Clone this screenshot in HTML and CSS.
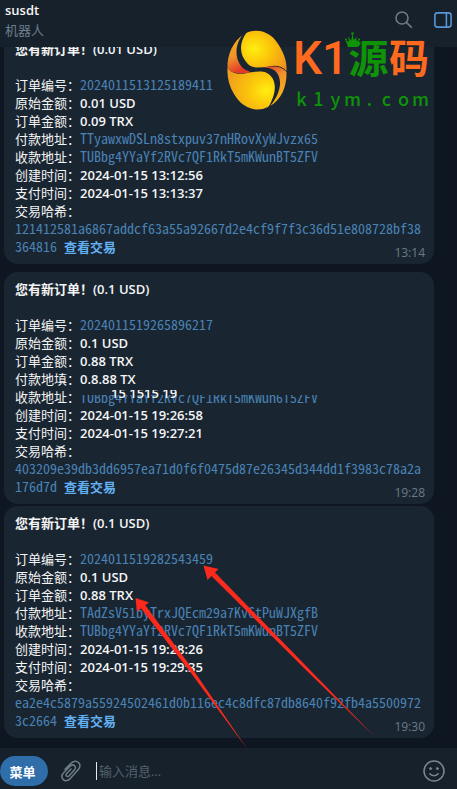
FILE: index.html
```
<!DOCTYPE html>
<html lang="zh-CN">

<head>
    <meta charset="UTF-8">
    <meta name="viewport" content="width=device-width, initial-scale=1">
    <title>susdt</title>
    <link rel="stylesheet" href="styles.css">
</head>

<body>
    <div class="app">
        <header class="chat-header">
            <div class="chat-info">
                <h1 class="chat-name">susdt</h1>
                <div class="chat-status">机器人</div>
            </div>
            <div class="header-actions">
                <button class="icon-button search-button" aria-label="搜索">
                    <svg width="18" height="18" viewBox="0 0 18 18" fill="none" stroke="#6f7b85" stroke-width="1.6">
                        <circle cx="7" cy="7" r="6" />
                        <path d="M11.3 11.3L16.8 16.6" />
                    </svg>
                </button>
                <button class="icon-button" aria-label="侧栏">
                    <svg width="18" height="16" viewBox="0 0 18 16" fill="none" stroke="#5795d4" stroke-width="1.6">
                        <rect x="0.9" y="0.9" width="16.2" height="14.2" rx="2.6" />
                        <path d="M12.4 1V15" />
                    </svg>
                </button>
            </div>
        </header>

        <main class="messages">
            <article class="message">
                <h2 class="message-title">您有新订单！(0.01 USD)</h2>
                <p>订单编号：<code>2024011513125189411</code></p>
                <p>原始金额：<b>0.01 USD</b></p>
                <p>订单金额：<b>0.09 TRX</b></p>
                <p>付款地址：<code>TTyawxwDSLn8stxpuv37nHRovXyWJvzx65</code></p>
                <p>收款地址：<code>TUBbg4YYaYf2RVc7QF1RkT5mKWunBT5ZFV</code></p>
                <p>创建时间：<b>2024-01-15 13:12:56</b></p>
                <p>支付时间：<b>2024-01-15 13:13:37</b></p>
                <p>交易哈希：</p>
                <p class="hash"><code>121412581a6867addcf63a55a92667d2e4cf9f7f3c36d51e808728bf38<wbr>364816 </code><a href="#">查看交易</a></p>
                <time class="message-time">13:14</time>
            </article>

            <article class="message grouped">
                <h2 class="message-title">您有新订单！(0.1 USD)</h2>
                <p>订单编号：<code>2024011519265896217</code></p>
                <p>原始金额：<b>0.1 USD</b></p>
                <p>订单金额：<b>0.88 TRX</b></p>
                <p>付款地填：<b>0.8.88 TX</b></p>
                <p class="masked">收款地址：<code>TUBbg4YYaYf2RVc7QF1RkT5mKWun6T5ZFV</code><b class="remnant">15 1515 19</b></p>
                <p>创建时间：<b>2024-01-15 19:26:58</b></p>
                <p>支付时间：<b>2024-01-15 19:27:21</b></p>
                <p>交易哈希：</p>
                <p class="hash"><code>403209e39db3dd6957ea71d0f6f0475d87e26345d344dd1f3983c78a2a<wbr>176d7d </code><a href="#">查看交易</a></p>
                <time class="message-time">19:28</time>
            </article>

            <article class="message">
                <h2 class="message-title">您有新订单！(0.1 USD)</h2>
                <p>订单编号：<code>2024011519282543459</code></p>
                <p>原始金额：<b>0.1 USD</b></p>
                <p>订单金额：<b>0.88 TRX</b></p>
                <p>付款地址：<code>TAdZsV51byTrxJQEcm29a7KvGtPuWJXgfB</code></p>
                <p>收款地址：<code>TUBbg4YYaYf2RVc7QF1RkT5mKWunBT5ZFV</code></p>
                <p>创建时间：<b>2024-01-15 19:28:26</b></p>
                <p>支付时间：<b>2024-01-15 19:29:35</b></p>
                <p>交易哈希：</p>
                <p class="hash"><code>ea2e4c5879a55924502461d0b116ec4c8dfc87db8640f92fb4a5500972<wbr>3c2664 </code><a href="#">查看交易</a></p>
                <time class="message-time">19:30</time>
            </article>
        </main>

        <footer class="composer">
            <button class="menu-button">菜单</button>
            <button class="icon-button" aria-label="附件">
                <svg width="20" height="22" viewBox="0 0 20 22" fill="none" stroke="#6f7b85" stroke-width="1.5" stroke-linecap="round">
                    <path d="M4 9.2L10.6 2.8C12.8 0.7 15.7 0.6 17.5 2.5C19.4 4.5 19.2 7.2 17.3 9.4L9.3 18.4C7.2 20.9 4.2 21.4 2.3 19.6C0.4 17.8 0.7 14.9 2.6 12.7L9 6.2C10.5 4.7 12.4 4.6 13.6 5.8C14.8 7 14.6 8.6 13.3 10L8.2 15.7C7.4 16.6 6.3 16.8 5.5 16C4.8 15.3 4.9 14.3 5.7 13.4L10 9" />
                </svg>
            </button>
            <input class="message-input" type="text" placeholder="输入消息..." aria-label="输入消息">
            <button class="icon-button" aria-label="表情">
                <svg width="22" height="22" viewBox="0 0 22 22" fill="none" stroke="#7d8790" stroke-width="1.5" stroke-linecap="round">
                    <circle cx="11" cy="11" r="10" />
                    <path d="M6.8 13.8C8.8 16.3 13.2 16.3 15.2 13.8" />
                    <circle cx="7.6" cy="8.6" r="1" fill="#7d8790" stroke-width="1" />
                    <circle cx="14.4" cy="8.6" r="1" fill="#7d8790" stroke-width="1" />
                </svg>
            </button>
        </footer>

        <!-- site watermark -->
        <div class="watermark">
            <svg class="watermark-logo" width="60" height="80" viewBox="0 0 60 80">
                <defs>
                    <radialGradient id="goldTop" cx="0.3" cy="0.45" r="0.8">
                        <stop offset="0" stop-color="#ffee10" />
                        <stop offset="0.45" stop-color="#fbc60a" />
                        <stop offset="1" stop-color="#f0901c" />
                    </radialGradient>
                    <radialGradient id="goldBottom" cx="0.8" cy="0.55" r="0.8">
                        <stop offset="0" stop-color="#ffee10" />
                        <stop offset="0.45" stop-color="#fbc60a" />
                        <stop offset="1" stop-color="#f0a01c" />
                    </radialGradient>
                    <linearGradient id="edgeLeft" x1="0" y1="0" x2="0.3" y2="1">
                        <stop offset="0" stop-color="#fbb80c" />
                        <stop offset="0.6" stop-color="#f0932b" />
                        <stop offset="1" stop-color="#e23a26" />
                    </linearGradient>
                    <linearGradient id="edgeRight" x1="0" y1="0" x2="0.3" y2="1">
                        <stop offset="0" stop-color="#e23a26" />
                        <stop offset="0.4" stop-color="#f0932b" />
                        <stop offset="1" stop-color="#fbb80c" />
                    </linearGradient>
                </defs>
                <path fill="url(#goldTop)" d="M19 3C32-3 46 3 53 17C58 26 60 33 59.5 41C55 36 49 35 42 36.5C34 38 28 39 22 36C11 31 11 13 19 3Z" />
                <path fill="url(#edgeLeft)" d="M17 4C6 11 0 25 0.5 38C4 43 11 44.5 24 42.500C8 34 8 17 17 4Z" />
                <path fill="url(#goldBottom)" d="M0.5 38C6 45 14 44.5 23 42.5C31 41 38 40 43 44C53 53 50 69 41 77C29 83 15 78 7 64C2 56 0 47 0.5 38Z" />
                <path fill="url(#edgeRight)" d="M36 37.5C48 35 56 37 59.5 42C60 57 54 70 43 76C52 64 54 45 36 37.5Z" />
                <path fill="#192632" d="M18 2C8 12 7 27 14 36C20 44 31 40 38 42C50 47 51 61 41 78L43 76C56 61 56 44 45 39C36 35 26 41 20 33C12 24 12 12 20 2Z" />
            </svg>
            <div class="watermark-text">
                <div class="watermark-title">
                    <span class="latin">K1</span>
                    <span class="green">源</span>
                    <span>码</span>
                    <svg class="crown" width="15" height="15" viewBox="0 0 15 15" fill="#0f9407">
                        <path d="M3 15L0.5 8L4 10L3.3 4.5L6.2 8.8L7.5 1L8.8 8.8L11.7 4.5L11 10L14.5 8L12 15Z" />
                        <circle cx="7.5" cy="1.5" r="1.3" />
                        <circle cx="1" cy="7.5" r="1" />
                        <circle cx="14" cy="7.5" r="1" />
                    </svg>
                </div>
                <div class="watermark-url">
                    <span>k</span><span>1</span><span>y</span><span>m</span><span>.</span><span>c</span><span>o</span><span>m</span>
                </div>
            </div>
        </div>

        <!-- arrows pointing at the order number and the amount -->
        <svg class="arrows" width="250" height="190" viewBox="130 562 250 190" fill="#fb2a1c">
            <path d="M135.5 598L149 602.5L145.3 605.3L194 671L248 750L191 673L141 608.2L137 612Z" />
            <path d="M203.5 565.5L218.5 569L215 572.5L309 669L374 736L307 671L211.5 576L207.5 580Z" />
        </svg>
    </div>
</body>

</html>
```
FILE: styles.css
```
* {
    box-sizing: border-box;
}

body {
    margin: 0;
    background-color: #0e1621;
    color: #f5f5f5;
    font-family: "Open Sans", "Noto Sans CJK SC", sans-serif;
    font-size: 13px;
    line-height: 18px;
}

h1,
h2,
p {
    margin: 0;
    font-size: 13px;
}

button {
    border: none;
    padding: 0;
    background: none;
    font-family: inherit;
    cursor: pointer;
}

.app {
    position: relative;
    display: flex;
    flex-direction: column;
    height: 100vh;
    overflow: hidden;
}

/* header */
.chat-header {
    display: flex;
    flex-shrink: 0;
    justify-content: space-between;
    padding: 0 5px 7px;
    background-color: #17212b;
}

.chat-name {
    font-weight: 600;
    line-height: 20px;
}

.chat-status {
    color: #6c7d8c;
    line-height: 20px;
}

.header-actions {
    display: flex;
    align-items: center;
    gap: 21px;
    height: 40px;
}

.icon-button svg {
    display: block;
}

/* messages */
.messages {
    display: flex;
    flex: 1;
    flex-direction: column;
    justify-content: flex-end;
    gap: 8px;
    min-height: 0;
    overflow: hidden;
    padding: 0 23px 10px 4px;
}

.message {
    position: relative;
    flex-shrink: 0;
    padding: 8px 11px;
    border-radius: 14px;
    background-color: #192632;
}

.message.grouped {
    margin-bottom: -6px;
}

.message-title {
    margin-bottom: 18px;
    font-weight: 600;
}

.message p {
    height: 18px;
    white-space: nowrap;
}

.message .hash {
    height: 36px;
    white-space: normal;
}

.message b {
    font-weight: 600;
}

.message code {
    color: #4a82b4;
    font-family: "Noto Sans Mono CJK SC", "DejaVu Sans Mono", monospace;
    font-size: 14px;
    line-height: 16px;
}

.message a {
    color: #62b0f2;
    font-weight: 600;
    text-decoration: none;
}

.message-time {
    position: absolute;
    right: 9px;
    bottom: 2px;
    color: #6d7a86;
    font-size: 12px;
}

.masked {
    position: relative;
}

.masked code {
    display: inline-block;
    height: 18px;
    line-height: 18px;
    vertical-align: top;
    clip-path: inset(7px 0 0 0);
}

.remnant {
    position: absolute;
    left: 96px;
    top: -4px;
    clip-path: inset(6px 0 0 0);
}

/* composer */
.composer {
    display: flex;
    flex-shrink: 0;
    align-items: center;
    padding: 5px 12px 0 0;
    height: 41px;
    background-color: #17212b;
}

.menu-button {
    margin-right: 13px;
    padding-right: 3px;
    width: 48px;
    height: 30px;
    border-radius: 15px;
    background-color: #2f6ea8;
    color: #fff;
    font-size: 13px;
    font-weight: 600;
}

.message-input {
    flex: 1;
    margin: 0 12px 0 15px;
    border: none;
    border-left: 1px solid #e8e8e8;
    padding: 0 2px;
    min-width: 0;
    height: 18px;
    outline: none;
    background: none;
    color: #f5f5f5;
    font-family: inherit;
    font-size: 13px;
}

.message-input::placeholder {
    color: #53606c;
    opacity: 1;
}

/* watermark */
.watermark {
    position: absolute;
    top: 30px;
    right: 28px;
    display: flex;
    gap: 6px;
    width: 202px;
    pointer-events: none;
}

.watermark-logo {
    flex-shrink: 0;
}

.watermark-text {
    flex: 1;
    min-width: 0;
}

.watermark-title {
    position: relative;
    display: flex;
    align-items: center;
    justify-content: space-between;
    height: 56px;
    color: #ff6a1f;
    font-size: 40px;
    font-weight: 700;
    line-height: 52px;
}

.watermark-title .latin {
    font-family: Roboto, sans-serif;
    font-size: 46px;
    font-weight: 500;
}

.green {
    color: #0f9407;
}

.crown {
    position: absolute;
    left: 52px;
    top: 2px;
}

.watermark-url {
    display: grid;
    grid-template-columns: repeat(8, 1fr);
    color: #0f9407;
    font-family: "Noto Sans CJK SC", sans-serif;
    font-size: 18px;
    font-weight: 500;
    line-height: 24px;
    text-align: center;
}

.arrows {
    position: absolute;
    left: 130px;
    bottom: 37px;
    pointer-events: none;
}
```
